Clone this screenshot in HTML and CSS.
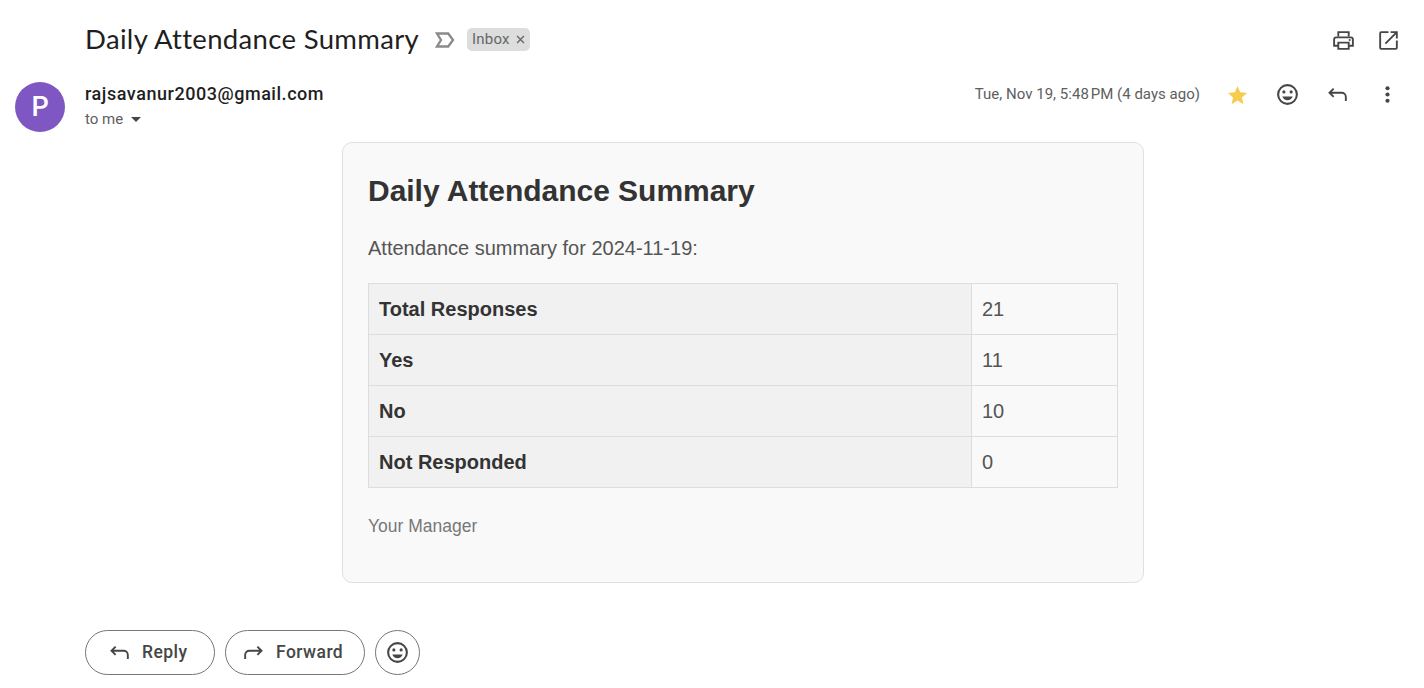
FILE: index.html
```html
<!DOCTYPE html>
<html lang="en">
<head>
<meta charset="utf-8">
<title>Daily Attendance Summary</title>
<link rel="stylesheet" href="styles.css">
</head>
<body>
<svg class="defs" aria-hidden="true">
  <symbol id="smile" viewBox="0 0 24 24"><circle cx="12" cy="12" r="9" fill="none" stroke="currentColor" stroke-width="2"/><circle cx="8.5" cy="9.5" r="1.5"/><circle cx="15.5" cy="9.5" r="1.5"/><path d="M7 14h10c-.8 2.1-2.700 3.500-5 3.500S7.800 16.100 7 14z"/></symbol>
  <symbol id="reply" viewBox="0 0 24 24"><path d="M8.300 6.300 4.300 10.300l4 4M4.500 10.300H16a4 4 0 0 1 4 4v4" fill="none" stroke="currentColor" stroke-width="1.800"/></symbol>
  <symbol id="forward" viewBox="0 0 24 24"><path d="m15.700 6.300 4 4-4 4M19.500 10.300H8a4 4 0 0 0-4 4v4" fill="none" stroke="currentColor" stroke-width="1.800"/></symbol>
</svg>
<main class="mail">
  <header class="subject-row">
    <h1 class="subject">Daily Attendance Summary</h1>
    <svg class="marker" viewBox="0 0 20 16"><path d="M2 1.500h11.200L18 8l-4.800 6.500H2L6 8z" fill="none" stroke="currentColor" stroke-width="2.300"/></svg>
    <span class="label"><span class="label-name">Inbox</span><svg class="label-close" viewBox="0 0 10 10"><path d="m1.200 1.200 7.600 7.600m0-7.600L1.200 8.800" stroke="currentColor" stroke-width="1.500"/></svg></span>
    <div class="tools">
      <svg class="icon" viewBox="0 0 24 24"><path d="M7 8V4h10v4M7 17H3v-6a2 2 0 0 1 2-2h14a2 2 0 0 1 2 2v6h-4M7 14h10v6H7z" fill="none" stroke="currentColor" stroke-width="1.800"/><circle cx="18" cy="11.500" r="1"/></svg>
      <svg class="icon" viewBox="0 0 24 24"><path d="M12 4H5a1 1 0 0 0-1 1v14a1 1 0 0 0 1 1h14a1 1 0 0 0 1-1v-7M14 4h6v6M9 15 19.500 4.500" fill="none" stroke="currentColor" stroke-width="1.800"/></svg>
    </div>
  </header>
  <section class="sender-row">
    <div class="avatar">P</div>
    <div class="sender">
      <div class="address">rajsavanur2003@gmail.com</div>
      <div class="recipient"><span class="to-me">to me</span><i class="caret"></i></div>
    </div>
    <div class="meta">
      <time class="date">Tue, Nov 19, 5:48&#8239;PM (4 days ago)</time>
      <div class="actions">
        <svg class="icon star" viewBox="0 0 24 24"><path d="m12 17.800 5.700 3.500-1.500-6.500L21.200 10.500l-6.600-.6L12 3.800 9.400 9.900l-6.600.6 5 4.300-1.500 6.500z"/></svg>
        <svg class="icon"><use href="#smile"/></svg>
        <svg class="icon"><use href="#reply"/></svg>
        <svg class="icon" viewBox="0 0 24 24"><circle cx="12" cy="6" r="2"/><circle cx="12" cy="12" r="2"/><circle cx="12" cy="18" r="2"/></svg>
      </div>
    </div>
  </section>
  <article class="card">
    <h2 class="card-title">Daily Attendance Summary</h2>
    <p class="card-intro">Attendance summary for 2024-11-19:</p>
    <table class="summary">
      <tr><th>Total Responses</th><td>21</td></tr>
      <tr><th>Yes</th><td>11</td></tr>
      <tr><th>No</th><td>10</td></tr>
      <tr><th>Not Responded</th><td>0</td></tr>
    </table>
    <p class="card-sign">Your Manager</p>
  </article>
  <footer class="replies">
    <button class="pill reply"><svg class="icon"><use href="#reply"/></svg><span class="pill-text">Reply</span></button>
    <button class="pill forward"><svg class="icon"><use href="#forward"/></svg><span class="pill-text">Forward</span></button>
    <button class="pill react"><svg class="icon"><use href="#smile"/></svg></button>
  </footer>
</main>
</body>
</html>
```
FILE: styles.css
```css
* { box-sizing: border-box; }
body { margin: 0; background: #fff; font-family: Roboto, "Liberation Sans", sans-serif; color: #1f1f1f; overflow: hidden; }
.defs { display: none; }
.mail { display: flex; flex-direction: column; height: 688px; }
svg { fill: currentColor; flex: none; }
.icon { width: 25px; height: 25px; color: #444746; }

.subject-row { display: flex; align-items: center; height: 80px; padding: 0 23px 0 85px; }
.subject { margin: 0; padding-bottom: 2px; width: 350px; font: 400 27.5px/36px Lato, sans-serif; letter-spacing: .33px; white-space: nowrap; }
.marker { width: 20px; height: 16px; color: #8a8a8a; }
.label { display: flex; align-items: center; gap: 6px; height: 23px; margin: 0 0 1px 12px; padding: 0 5px; border-radius: 5px; background: #ddd; color: #666; font-size: 15px; letter-spacing: .2px; }
.label-name { padding-bottom: 1px; }
.label-close { width: 9px; height: 9px; }
.tools { display: flex; gap: 20px; margin-left: auto; }

.sender-row { display: flex; height: 62px; padding: 2px 24px 0 15px; }
.avatar { width: 50px; height: 50px; border-radius: 50%; background: #7e57c2; color: #fff; font: 500 27px/51px Roboto, sans-serif; text-align: center; }
.sender { margin-left: 20px; }
.address { font-size: 18px; font-weight: 500; line-height: 24px; letter-spacing: .54px; }
.recipient { display: flex; align-items: center; gap: 8px; font-size: 15px; line-height: 26px; color: #5e5e5e; }
.caret { border: 5px solid transparent; border-top-color: #444746; border-bottom: 0; }
.meta { display: flex; align-items: center; gap: 25px; height: 25px; margin-left: auto; }
.date { padding-bottom: 2px; font-size: 15px; letter-spacing: .02px; color: #5e5e5e; }
.actions { display: flex; gap: 25px; }
.star { color: #f7cb4d; }

.card { width: 802px; height: 441px; margin-left: 342px; padding: 25px; border: 1px solid #e0e0e0; border-radius: 10px; background: #f9f9f9; font-family: "Liberation Sans", Arial, sans-serif; color: #555; }
.card-title { margin: 0; color: #333; font-size: 30px; line-height: 45px; letter-spacing: -.03px; }
.card-intro { margin: 20px 0; font-size: 20px; line-height: 30px; }
.summary { width: 750px; table-layout: fixed; border-collapse: collapse; font-size: 20px; line-height: 30px; text-align: left; }
.summary th, .summary td { height: 51px; padding: 10px; border: 1px solid #ddd; }
.summary th { width: 603px; background: #f1f1f1; color: #333; }
.card-sign { margin: 25px 0 0; font-size: 17.500px; line-height: 27px; color: #777; }

.replies { display: flex; gap: 10px; margin: 47px 0 0 85px; }
.pill { display: flex; align-items: center; height: 45px; padding: 0 0 0 21px; border: 1px solid #747775; border-radius: 23px; background: #fff; color: #444746; font: 500 17.500px Roboto, sans-serif; letter-spacing: .45px; }
.pill .icon { margin-right: 10px; }
.pill-text { padding-bottom: 2px; }
.reply { width: 130px; }
.forward { width: 140px; padding-left: 15px; }
.react { width: 45px; padding: 0 0 0 9px; }
```
